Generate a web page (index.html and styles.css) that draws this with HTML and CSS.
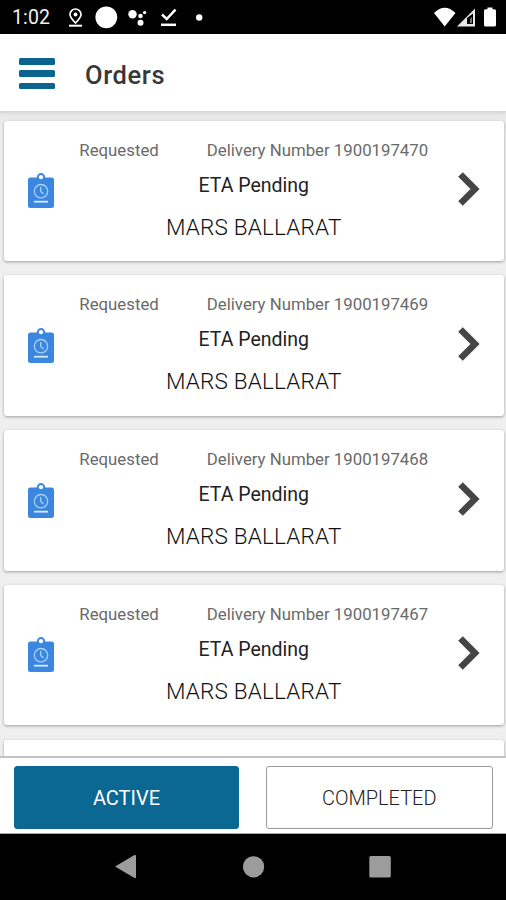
FILE: index.html
```html
<!DOCTYPE html>
<html lang="en">
<head>
<meta charset="utf-8">
<title>Orders</title>
<link rel="stylesheet" href="styles.css">
</head>
<body>
<svg class="defs" aria-hidden="true">
  <symbol id="clipboard" viewBox="0 0 30 38">
    <path fill="#3b86de" d="M3.500 6.500H9.700C10.200 3.500 11.700 2 14 2S17.800 3.500 18.300 6.500H24.500Q27 6.500 27 9V34.500Q27 37 24.500 37H3.500Q1 37 1 34.500V9Q1 6.500 3.500 6.500Z"/>
    <circle cx="14" cy="6.200" r="2.100" fill="#fff"/>
    <circle cx="14" cy="20.200" r="6.700" fill="none" stroke="#a9d1fa" stroke-width="1.300"/>
    <path d="M13.700 16V20.500L16.500 23" fill="none" stroke="#a9d1fa" stroke-width="1.300"/>
    <path d="M7 30.700H21" stroke="#d5e9ff" stroke-width="1.800"/>
  </symbol>
  <symbol id="chevron" viewBox="0 0 24 36">
    <path d="M3.500 3.500L18 18L3.500 32.500" fill="none" stroke="#454545" stroke-width="6.500"/>
  </symbol>
</svg>
<div class="screen">
  <div class="status">
    <span class="time">1:02</span>
    <svg class="notices" width="150" height="34" viewBox="60 0 150 34">
      <path d="M75.500 23C71.500 19 70 17 70 14.500A5.500 5.500 0 0 1 81 14.500C81 17 79.500 19 75.500 23Z" fill="none" stroke="#fff" stroke-width="1.700"/>
      <circle cx="75.500" cy="14.500" r="1.900" fill="#fff"/>
      <path d="M69 25.700H82" stroke="#fff" stroke-width="2"/>
      <circle cx="106.300" cy="17.300" r="10.900" fill="#fff"/>
      <circle cx="132.500" cy="14.300" r="4.200" fill="#fff"/>
      <circle cx="140.500" cy="16" r="2.300" fill="#fff"/>
      <circle cx="144.600" cy="12.600" r="1.700" fill="#fff"/>
      <circle cx="140.500" cy="22.700" r="3" fill="#fff"/>
      <path d="M162 14.500L166.700 19L175.500 9.700" fill="none" stroke="#fff" stroke-width="2.500"/>
      <path d="M161 24.800H176" stroke="#fff" stroke-width="2.500"/>
      <circle cx="199.200" cy="17.500" r="3.200" fill="#fff"/>
    </svg>
    <svg class="signals" width="76" height="34" viewBox="430 0 76 34">
      <path d="M434 13Q444.700 2.500 455.500 13L444.700 26.500Z" fill="#fff"/>
      <path fill-rule="evenodd" d="M457 26.500L475 8.500V26.500ZM467 18V24H473V13.500Z" fill="#e8e8e8"/>
      <path d="M470 19L472 17V23H470Z" fill="#777"/>
      <path d="M487.500 7.500H492.500V9.300H494.500Q496 9.300 496 10.800V25Q496 26.500 494.500 26.500H485.500Q484 26.500 484 25V10.800Q484 9.300 485.500 9.300H487.500Z" fill="#fff"/>
    </svg>
  </div>
  <header class="header">
    <div class="menu"><i></i><i></i><i></i></div>
    <h1>Orders</h1>
  </header>
  <main class="list">
    <article class="card">
      <svg class="clip"><use href="#clipboard"/></svg>
      <div class="info"><p class="meta"><span>Requested</span><span>Delivery Number 1900197470</span></p><p class="eta">ETA Pending</p><p class="place">MARS BALLARAT</p></div>
      <svg class="chev"><use href="#chevron"/></svg>
    </article>
    <article class="card">
      <svg class="clip"><use href="#clipboard"/></svg>
      <div class="info"><p class="meta"><span>Requested</span><span>Delivery Number 1900197469</span></p><p class="eta">ETA Pending</p><p class="place">MARS BALLARAT</p></div>
      <svg class="chev"><use href="#chevron"/></svg>
    </article>
    <article class="card">
      <svg class="clip"><use href="#clipboard"/></svg>
      <div class="info"><p class="meta"><span>Requested</span><span>Delivery Number 1900197468</span></p><p class="eta">ETA Pending</p><p class="place">MARS BALLARAT</p></div>
      <svg class="chev"><use href="#chevron"/></svg>
    </article>
    <article class="card">
      <svg class="clip"><use href="#clipboard"/></svg>
      <div class="info"><p class="meta"><span>Requested</span><span>Delivery Number 1900197467</span></p><p class="eta">ETA Pending</p><p class="place">MARS BALLARAT</p></div>
      <svg class="chev"><use href="#chevron"/></svg>
    </article>
    <article class="card"></article>
  </main>
  <footer class="tabs">
    <div class="tab active">ACTIVE</div>
    <div class="tab">COMPLETED</div>
  </footer>
  <nav class="nav">
    <svg width="506" height="66" viewBox="0 834 506 66" fill="#9c9c9c">
      <path d="M115 866.500L134.500 855Q136 854.500 136 856V877Q136 878.500 134.500 878Z"/>
      <circle cx="253.600" cy="866.800" r="10.600"/>
      <rect x="369.300" y="856" width="21.500" height="21.500" rx="1.500"/>
    </svg>
  </nav>
</div>
</body>
</html>
```
FILE: styles.css
```css
* { box-sizing: border-box; }
body { margin: 0; font-family: Roboto, "Liberation Sans", sans-serif; }
h1, p { margin: 0; }
svg { display: block; flex: none; }
.defs { display: none; }
.screen { width: 506px; height: 900px; display: flex; flex-direction: column; overflow: hidden; background: #fff; }
.status { height: 34px; flex: none; display: flex; background: #000; color: #f2f2f2; }
.time { width: 60px; padding-left: 12px; font-size: 19.500px; line-height: 36px; letter-spacing: .1px; }
.signals { margin-left: auto; }
.header { height: 77px; flex: none; display: flex; padding-left: 19px; background: #fff; }
.menu { width: 36px; height: 31px; margin-top: 24px; display: flex; flex-direction: column; justify-content: space-between; }
.menu i { height: 6.500px; border-radius: 1.500px; background: #0b6490; }
h1 { margin-left: 30px; font-size: 25.500px; font-weight: 500; line-height: 83px; letter-spacing: .6px; color: #383838; }
.list { flex: 1; overflow: hidden; display: flex; flex-direction: column; gap: 14.300px; padding: 9.500px 2.500px 0 4px; background: linear-gradient(#d4d4d4, #e8e8e8 4px, #eaeaea 9px, #efefef 20px); }
.card { height: 140.500px; flex: none; display: flex; border-radius: 3px; background: #fff; box-shadow: 0 1px 3px rgba(0, 0, 0, .35); }
.clip { width: 30px; height: 38px; margin: 50.500px 0 0 22.500px; }
.info { flex: 1; padding: 11px 6px 0 0; text-align: center; white-space: nowrap; }
.meta { display: flex; justify-content: center; gap: 48px; font-size: 16.800px; line-height: 36px; color: #6a6a6a; }
.eta { font-size: 19.500px; line-height: 36px; color: #222; }
.place { font-size: 22.500px; font-weight: 300; line-height: 46px; letter-spacing: .2px; color: #111; }
.chev { width: 24px; height: 36px; margin: 50.500px 22.500px 0 0; }
.tabs { height: 78px; flex: none; display: flex; gap: 27px; padding: 7.500px 13.500px 5px 14px; background: #fff; border-top: 2px solid #c4c4c4; border-bottom: 1px solid #aaa; }
.tab { flex: 1 1 0; height: 63px; border: 1px solid #999; border-radius: 3px; text-align: center; font-size: 20px; line-height: 63px; font-weight: 300; color: #222; }
.active { flex: 0 0 225px; background: #0a6892; border-color: #0a6892; color: #fff; font-weight: 400; }
.nav { height: 66px; flex: none; background: #000; }
```
